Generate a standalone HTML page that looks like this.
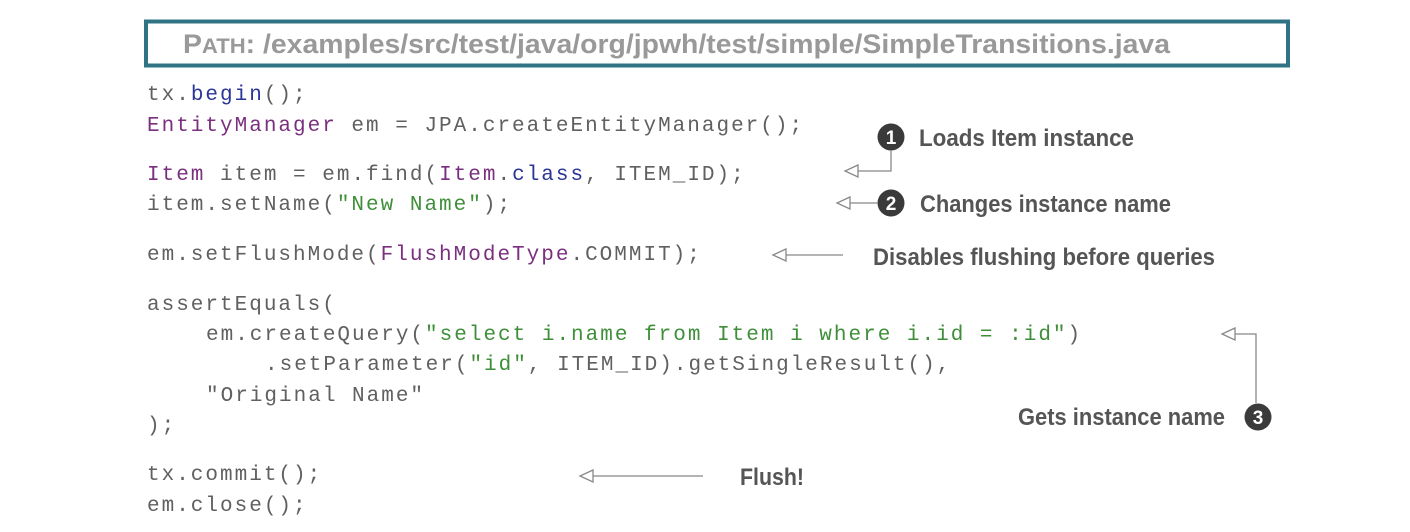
<!DOCTYPE html>
<html><head><meta charset="utf-8"><style>
html,body{margin:0;padding:0;background:#fff;width:1410px;height:532px;overflow:hidden}
svg{display:block}
.c{font-family:"Liberation Mono",monospace;font-size:21px;letter-spacing:2px;fill:#606060}
.p{fill:#7a2f7f}.b{fill:#2b3596}.g{fill:#3f8f3a}
.l{font-family:"Liberation Sans Narrow","Liberation Sans",sans-serif;font-weight:bold;font-size:24px;fill:#555}
.n{font-family:"Liberation Sans Narrow","Liberation Sans",sans-serif;font-weight:bold;font-size:19px;fill:#fff}
.a{stroke:#888;stroke-width:1.3;fill:none}
</style></head><body>
<svg width="1410" height="532" viewBox="0 0 1410 532">
<rect x="146" y="21.5" width="1142" height="44" fill="#fff" stroke="#2f7385" stroke-width="4"/>
<text x="183" y="53" font-family="Liberation Sans Narrow,Liberation Sans,sans-serif" font-weight="bold" font-size="27" fill="#999" textLength="987" lengthAdjust="spacingAndGlyphs">P<tspan font-size="21">ATH</tspan>: /examples/src/test/java/org/jpwh/test/simple/SimpleTransitions.java</text>

<text class="c" x="147" y="100">tx.<tspan class="b">begin</tspan>();</text>
<text class="c" x="147" y="131"><tspan class="p">EntityManager</tspan> em = JPA.createEntityManager();</text>
<text class="c" x="147" y="180"><tspan class="p">Item</tspan> item = em.find(<tspan class="p">Item</tspan>.<tspan class="b">class</tspan>, ITEM_ID);</text>
<text class="c" x="147" y="210">item.setName(<tspan class="g">"New Name"</tspan>);</text>
<text class="c" x="147" y="260">em.setFlushMode(<tspan class="p">FlushModeType</tspan>.COMMIT);</text>
<text class="c" x="147" y="310">assertEquals(</text>
<text class="c" x="206" y="340">em.createQuery(<tspan class="g">"select i.name from Item i where i.id = :id"</tspan>)</text>
<text class="c" x="265" y="370">.setParameter(<tspan class="g">"id"</tspan>, ITEM_ID).getSingleResult(),</text>
<text class="c" x="206" y="401">"Original Name"</text>
<text class="c" x="147" y="431">);</text>
<text class="c" x="147" y="480">tx.commit();</text>
<text class="c" x="147" y="511">em.close();</text>

<circle cx="891" cy="137" r="13.5" fill="#3a3a3a"/>
<text class="n" x="891" y="144" text-anchor="middle">1</text>
<text class="l" x="919" y="146" textLength="215" lengthAdjust="spacingAndGlyphs">Loads Item instance</text>
<path class="a" d="M891 150 V171 H858 M858 165 L845 171 L858 177 Z"/>

<circle cx="891" cy="203" r="13.5" fill="#3a3a3a"/>
<text class="n" x="891" y="210" text-anchor="middle">2</text>
<text class="l" x="920" y="212" textLength="251" lengthAdjust="spacingAndGlyphs">Changes instance name</text>
<path class="a" d="M878 203 H850 M850 197 L837 203 L850 209 Z"/>

<text class="l" x="873" y="265" textLength="342" lengthAdjust="spacingAndGlyphs">Disables flushing before queries</text>
<path class="a" d="M843 255 H786 M786 249 L773 255 L786 261 Z"/>

<circle cx="1258" cy="417" r="13.5" fill="#3a3a3a"/>
<text class="n" x="1258" y="424" text-anchor="middle">3</text>
<text class="l" x="1018" y="425" textLength="207" lengthAdjust="spacingAndGlyphs">Gets instance name</text>
<path class="a" d="M1256 403 V334 H1235 M1235 328 L1222 334 L1235 340 Z"/>

<text class="l" x="740" y="485" textLength="64" lengthAdjust="spacingAndGlyphs">Flush!</text>
<path class="a" d="M703 476 H593 M593 470 L580 476 L593 482 Z"/>
</svg>
</body></html>
